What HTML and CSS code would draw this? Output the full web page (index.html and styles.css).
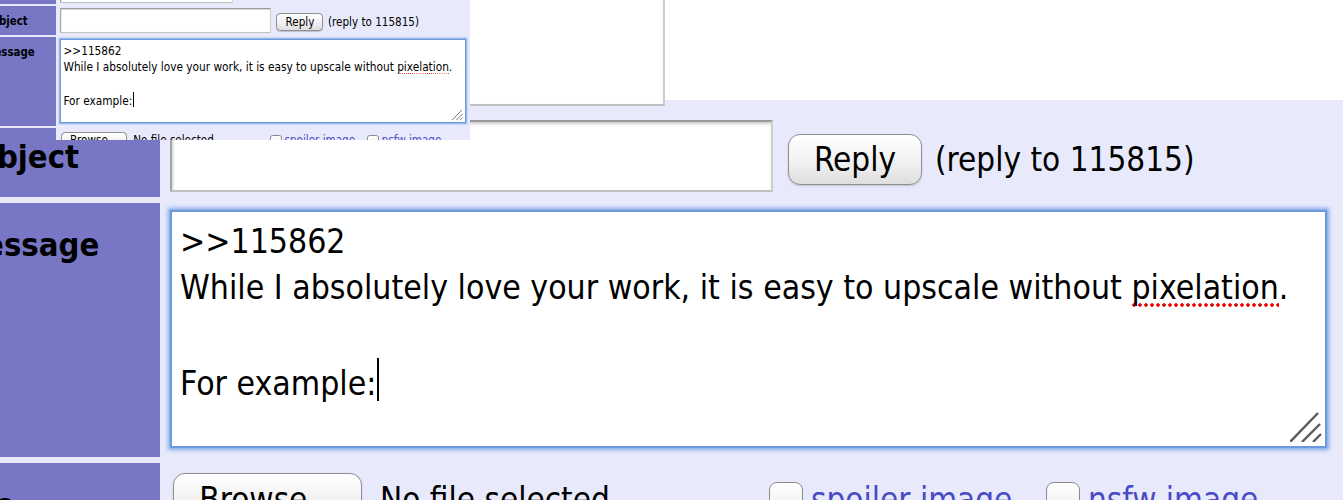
FILE: index.html
```html
<!DOCTYPE html>
<html lang="en">
<head>
<meta charset="utf-8">
<title>Post form</title>
<link rel="stylesheet" href="styles.css">
</head>
<body>
<div class="stage">
  <div class="view view-big">
    <div class="postform">
      <div class="label">Name</div>
      <div class="cell cell-name"><span class="field field-name"></span></div>
      <div class="label">Subject</div>
      <div class="cell cell-subject"><span class="field field-subject"></span><span class="btn btn-reply">Reply</span><span class="note">(reply to 115815)</span></div>
      <div class="label">Message</div>
      <div class="cell cell-message">
        <div class="textarea">
          <div class="line">&gt;&gt;115862</div>
          <div class="line">While I absolutely love your work, it is easy to upscale without <span class="misspelt">pixelation</span>.</div>
          <div class="line"><br></div>
          <div class="line">For example:<span class="caret"></span></div>
          <svg class="grip" viewBox="0 0 32 32"><path d="M0 32 L28 3 M12 32 L30 14 M23 32 L31 24"/></svg>
        </div>
      </div>
      <div class="label">File</div>
      <div class="cell cell-file"><span class="btn btn-browse">Browse...</span><span class="filename">No file selected</span><span class="check"></span><span class="opt opt-spoiler">spoiler image</span><span class="check"></span><span class="opt">nsfw image</span></div>
    </div>
  </div>
  <div class="view view-small">
    <div class="postform">
      <div class="label">Name</div>
      <div class="cell cell-name"><span class="field field-name"></span></div>
      <div class="label">Subject</div>
      <div class="cell cell-subject"><span class="field field-subject"></span><span class="btn btn-reply">Reply</span><span class="note">(reply to 115815)</span></div>
      <div class="label">Message</div>
      <div class="cell cell-message">
        <div class="textarea">
          <div class="line">&gt;&gt;115862</div>
          <div class="line">While I absolutely love your work, it is easy to upscale without <span class="misspelt">pixelation</span>.</div>
          <div class="line"><br></div>
          <div class="line">For example:<span class="caret"></span></div>
          <svg class="grip" viewBox="0 0 32 32"><path d="M0 32 L28 3 M12 32 L30 14 M23 32 L31 24"/></svg>
        </div>
      </div>
      <div class="label">File</div>
      <div class="cell cell-file"><span class="btn btn-browse">Browse...</span><span class="filename">No file selected</span><span class="check"></span><span class="opt opt-spoiler">spoiler image</span><span class="check"></span><span class="opt">nsfw image</span></div>
    </div>
  </div>
</div>
</body>
</html>
```
FILE: styles.css
```css
* { box-sizing: border-box; }
html, body { margin: 0; padding: 0; background: #fff; }
body { width: 1343px; height: 500px; overflow: hidden; }

.stage {
  position: relative;
  width: 1343px;
  height: 500px;
  overflow: hidden;
  background: #fff;
}

.view {
  --u: 1px;
  --top: 27;
  overflow: hidden;
  font-family: "DejaVu Sans Condensed", "Liberation Sans", sans-serif;
  color: #000;
}
.view-big {
  width: 1343px;
  height: 500px;
}
.view-small {
  --u: 0.35088px;
  --top: -70.5;
  position: absolute;
  top: 0;
  left: 0;
  width: 470px;
  height: 140px;
  background: #e8eafc;
}

.postform {
  display: grid;
  grid-template-columns: calc(var(--u) * 212) 1fr;
  grid-template-rows: calc(var(--u) * 82) calc(var(--u) * 82) calc(var(--u) * 254) calc(var(--u) * 90);
  column-gap: calc(var(--u) * 3);
  row-gap: calc(var(--u) * 6);
  margin-left: calc(var(--u) * -52);
  margin-top: calc(var(--u) * var(--top));
  font-size: calc(var(--u) * 33);
  background: #e8eafc;
}

.label {
  background: #7777c6;
  font-weight: bold;
  font-size: calc(var(--u) * 32.5);
  line-height: calc(var(--u) * 40);
  padding: calc(var(--u) * 22) 0 0 calc(var(--u) * 7);
  white-space: nowrap;
}

.cell {
  display: flex;
  padding-left: calc(var(--u) * 7);
  white-space: nowrap;
  min-width: 0;
}

.cell-name {
  align-items: flex-end;
  padding-bottom: calc(var(--u) * 3);
}
.view-big .cell-name {
  background: linear-gradient(#fff calc(var(--u) * 73), #e8eafc 0);
}

.field {
  display: block;
  flex: none;
  background: #fff;
  border: calc(var(--u) * 2) solid;
  border-color: #9a9a9a #cfcfcf #c0c0c0 #a6a6a6;
  box-shadow: inset calc(var(--u) * 1) calc(var(--u) * 2) calc(var(--u) * 3) rgba(0, 0, 0, 0.2);
}
.field-name {
  width: calc(var(--u) * 495);
  height: calc(var(--u) * 130);
}
.field-subject {
  width: calc(var(--u) * 603);
  height: calc(var(--u) * 72);
}

.cell-subject {
  align-items: center;
}

.btn {
  display: inline-flex;
  flex: none;
  align-items: center;
  justify-content: center;
  background: linear-gradient(#ffffff, #f1f1f1 55%, #dedede);
  border: calc(var(--u) * 1.5) solid #8f8f8f;
  border-radius: calc(var(--u) * 12);
  box-shadow: 0 calc(var(--u) * 1) calc(var(--u) * 2) rgba(0, 0, 0, 0.18);
}
.btn-reply {
  width: calc(var(--u) * 134);
  height: calc(var(--u) * 51);
  margin-left: calc(var(--u) * 15);
  margin-top: calc(var(--u) * 7);
}
.note {
  margin-left: calc(var(--u) * 13);
  margin-top: calc(var(--u) * 6);
}

.cell-message {
  align-items: flex-start;
  padding-top: calc(var(--u) * 7);
}
.textarea {
  position: relative;
  flex: none;
  width: calc(var(--u) * 1157);
  height: calc(var(--u) * 238);
  background: #fff;
  border: calc(var(--u) * 2) solid #6c98dc;
  box-shadow: 0 0 calc(var(--u) * 4) calc(var(--u) * 2) rgba(108, 156, 226, 0.85);
  padding: calc(var(--u) * 7) calc(var(--u) * 8);
  font-size: calc(var(--u) * 33.5);
  line-height: calc(var(--u) * 46.3);
}
.line { white-space: nowrap; }

.misspelt {
  background-image: radial-gradient(circle, #e80000 calc(var(--u) * 1.5), transparent calc(var(--u) * 1.9));
  background-size: calc(var(--u) * 6) calc(var(--u) * 4);
  background-repeat: repeat-x;
  background-position: 0 100%;
}

.caret {
  display: inline-block;
  width: max(1px, calc(var(--u) * 2));
  height: calc(var(--u) * 43);
  margin-left: calc(var(--u) * 1);
  vertical-align: calc(var(--u) * -6);
  background: #000;
}

.grip {
  position: absolute;
  right: calc(var(--u) * 3);
  bottom: calc(var(--u) * 4);
  width: calc(var(--u) * 32);
  height: calc(var(--u) * 32);
  fill: none;
  stroke: #5a5a5a;
  stroke-width: 2.4;
}

.cell-file {
  align-items: flex-start;
  padding-top: calc(var(--u) * 10);
  padding-left: calc(var(--u) * 10);
  line-height: calc(var(--u) * 50);
}
.btn-browse {
  width: calc(var(--u) * 189);
  height: calc(var(--u) * 52);
  padding-top: calc(var(--u) * 2);
}
.filename {
  flex: none;
  width: calc(var(--u) * 389);
  margin-left: calc(var(--u) * 18);
  padding-top: calc(var(--u) * 2);
}
.check {
  flex: none;
  width: calc(var(--u) * 34);
  height: calc(var(--u) * 34);
  margin-top: calc(var(--u) * 9);
  background: linear-gradient(#ffffff, #ececec);
  border: calc(var(--u) * 1.5) solid #8a8a8a;
  border-radius: calc(var(--u) * 8);
}
.opt {
  flex: none;
  margin-left: calc(var(--u) * 8);
  padding-top: calc(var(--u) * 2);
  color: #4a4ac6;
}
.opt-spoiler {
  width: calc(var(--u) * 235);
}
```
